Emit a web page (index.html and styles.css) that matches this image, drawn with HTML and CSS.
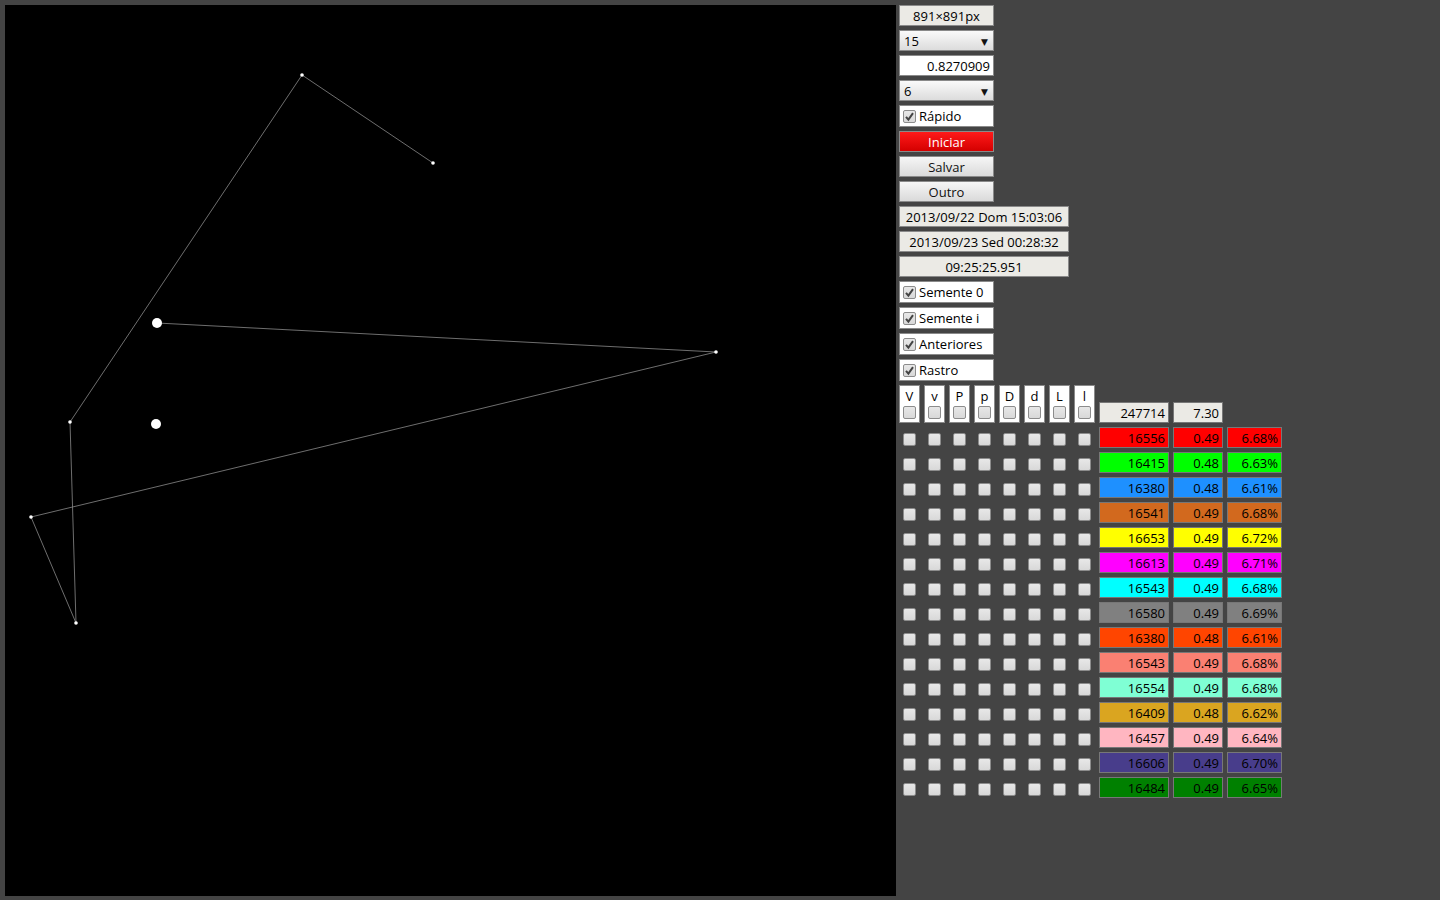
FILE: index.html
```html
<!DOCTYPE html>
<html lang="pt">
<head>
<meta charset="utf-8">
<title>Caminhada</title>
<link rel="stylesheet" href="styles.css">
</head>
<body>
<div class="app">
  <div class="stage">
    <svg class="canvas" width="891" height="891" viewBox="5 5 891 891">
      <rect x="5" y="5" width="891" height="891" fill="#000"/>
      <g stroke="#8a8a8a" stroke-width="0.8" fill="none">
        <line x1="302" y1="75" x2="433" y2="163"/>
        <line x1="302" y1="75" x2="70" y2="422"/>
        <line x1="70" y1="422" x2="76" y2="623"/>
        <line x1="76" y1="623" x2="31" y2="517"/>
        <line x1="31" y1="517" x2="716" y2="352"/>
        <line x1="716" y1="352" x2="157" y2="323"/>
      </g>
      <g fill="#fff">
        <circle cx="302" cy="75" r="1.8"/>
        <circle cx="433" cy="163" r="1.8"/>
        <circle cx="716" cy="352" r="1.8"/>
        <circle cx="70" cy="422" r="1.8"/>
        <circle cx="31" cy="517" r="1.8"/>
        <circle cx="76" cy="623" r="1.8"/>
        <circle cx="157" cy="323" r="5"/>
        <circle cx="156" cy="424" r="5"/>
      </g>
    </svg>
  </div>
  <div class="panel">
    <div class="ctl display center">891×891px</div>
    <div class="ctl select"><span>15</span><span class="arrow">▼</span></div>
    <div class="ctl input right">0.8270909</div>
    <div class="ctl select"><span>6</span><span class="arrow">▼</span></div>
    <label class="ctl check tall"><span class="cb on"><svg viewBox="0 0 13 13"><path d="M3 6.8 L5.4 9.6 L10 3.2" stroke="#444" stroke-width="2" fill="none"/></svg></span>Rápido</label>
    <div class="ctl btn red center">Iniciar</div>
    <div class="ctl btn center">Salvar</div>
    <div class="ctl btn center">Outro</div>
    <div class="ctl display wide center">2013/09/22 Dom 15:03:06</div>
    <div class="ctl display wide center">2013/09/23 Sed 00:28:32</div>
    <div class="ctl display wide center">09:25:25.951</div>
    <label class="ctl check tall"><span class="cb on"><svg viewBox="0 0 13 13"><path d="M3 6.8 L5.4 9.6 L10 3.2" stroke="#444" stroke-width="2" fill="none"/></svg></span>Semente 0</label>
    <label class="ctl check tall"><span class="cb on"><svg viewBox="0 0 13 13"><path d="M3 6.8 L5.4 9.6 L10 3.2" stroke="#444" stroke-width="2" fill="none"/></svg></span>Semente i</label>
    <label class="ctl check tall"><span class="cb on"><svg viewBox="0 0 13 13"><path d="M3 6.8 L5.4 9.6 L10 3.2" stroke="#444" stroke-width="2" fill="none"/></svg></span>Anteriores</label>
    <label class="ctl check tall"><span class="cb on"><svg viewBox="0 0 13 13"><path d="M3 6.8 L5.4 9.6 L10 3.2" stroke="#444" stroke-width="2" fill="none"/></svg></span>Rastro</label>

    <div class="grid">
      <div class="head"><span>V</span><span class="cb"></span></div>
      <div class="head"><span>v</span><span class="cb"></span></div>
      <div class="head"><span>P</span><span class="cb"></span></div>
      <div class="head"><span>p</span><span class="cb"></span></div>
      <div class="head"><span>D</span><span class="cb"></span></div>
      <div class="head"><span>d</span><span class="cb"></span></div>
      <div class="head"><span>L</span><span class="cb"></span></div>
      <div class="head"><span>l</span><span class="cb"></span></div>
      <div class="val total">247714</div>
      <div class="val total">7.30</div>
      <div></div>
    </div>
    <div id="rows"></div>
  </div>
</div>
<script src="app.js"></script>
</body>
</html>
```

FILE: app.js
```js
var data = [
  ["#ff0000","16556","0.49","6.68%"],
  ["#00ff00","16415","0.48","6.63%"],
  ["#1e90ff","16380","0.48","6.61%"],
  ["#d2691e","16541","0.49","6.68%"],
  ["#ffff00","16653","0.49","6.72%"],
  ["#ff00ff","16613","0.49","6.71%"],
  ["#00ffff","16543","0.49","6.68%"],
  ["#808080","16580","0.49","6.69%"],
  ["#ff4500","16380","0.48","6.61%"],
  ["#fa8072","16543","0.49","6.68%"],
  ["#7fffd4","16554","0.49","6.68%"],
  ["#daa520","16409","0.48","6.62%"],
  ["#ffb6c1","16457","0.49","6.64%"],
  ["#483d8b","16606","0.49","6.70%"],
  ["#008000","16484","0.49","6.65%"]
];
var rows = document.getElementById("rows");
data.forEach(function (d) {
  var r = document.createElement("div");
  r.className = "grid row";
  var h = "";
  for (var i = 0; i < 8; i++) h += '<div class="cell"><span class="cb"></span></div>';
  for (var j = 1; j < 4; j++) h += '<div class="val" style="background:' + d[0] + '">' + d[j] + '</div>';
  r.innerHTML = h;
  rows.appendChild(r);
});
```

FILE: styles.css
```css
* { box-sizing: border-box; }
html, body { margin: 0; padding: 0; }
body {
  background: #444444;
  font-family: "Open Sans", "DejaVu Sans", sans-serif;
  font-size: 13px;
  color: #000;
  width: 1440px;
  height: 900px;
  overflow: hidden;
}
.app {
  display: flex;
  align-items: flex-start;
}
.stage {
  padding: 5px 0 0 5px;
}
.canvas { display: block; }
.panel {
  margin-left: 3px;
  padding-top: 5px;
  display: flex;
  flex-direction: column;
  gap: 4px;
}
.ctl {
  width: 95px;
  height: 21px;
  border: 1px solid #8a8a8a;
  display: flex;
  align-items: center;
  line-height: 1;
  white-space: nowrap;
  padding-top: 1px;
}
.ctl.tall { height: 22px; }
.ctl.wide { width: 170px; }
.center { justify-content: center; }
.right { justify-content: flex-end; padding-right: 3px; }
.display { background: #ebeae5; }
.input { background: #fff; }
.select {
  background: linear-gradient(#fafafa, #dcdcdc);
  justify-content: space-between;
  padding: 1px 5px 0 4px;
}
.select .arrow { font-size: 9px; color: #111; }
.btn {
  background: linear-gradient(#f6f6f6, #dadada);
  color: #111;
}
.btn.red {
  background: linear-gradient(#ff1a1a, #d40000);
  color: #fff;
}
.check {
  background: #fff;
  padding: 0 0 0 3px;
  gap: 3px;
}
.cb {
  display: inline-block;
  width: 13px;
  height: 13px;
  border: 1px solid #8c8c8c;
  border-radius: 2px;
  background: linear-gradient(#e8e8e8, #d8d8d8);
  flex: none;
  position: relative;
}
.cb svg {
  position: absolute;
  left: -1px;
  top: -1px;
  width: 13px;
  height: 13px;
}
.grid {
  display: grid;
  grid-template-columns: repeat(8, 21px) 70px 50px 55px;
  column-gap: 4px;
  align-items: end;
}
.head {
  height: 38px;
  background: #fff;
  border: 1px solid #8a8a8a;
  display: flex;
  flex-direction: column;
  align-items: center;
  padding-top: 3px;
  gap: 2px;
  line-height: 15px;
}
.val {
  height: 21px;
  border: 1px solid #777;
  text-align: right;
  padding-right: 3px;
  line-height: 20px;
  white-space: nowrap;
}
.val.total { background: #ebeae5; }
#rows {
  display: flex;
  flex-direction: column;
  gap: 4px;
}
.row { align-items: center; }
.cell {
  height: 21px;
  display: flex;
  align-items: center;
  justify-content: center;
  padding-top: 3px;
}
```
